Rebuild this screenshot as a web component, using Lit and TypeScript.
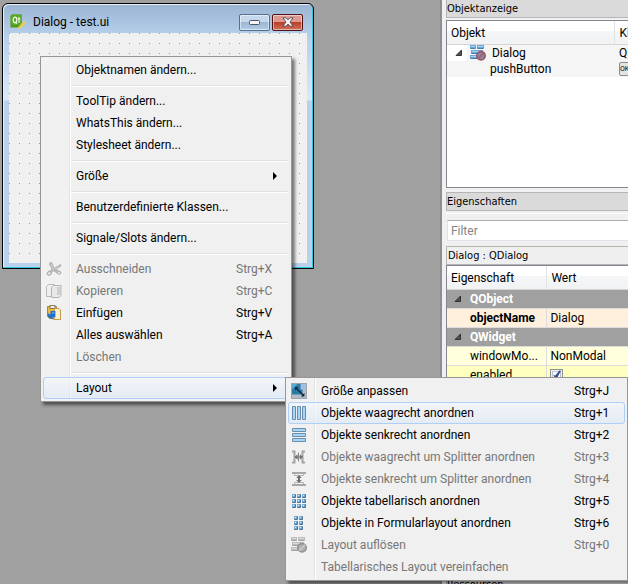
import { LitElement, html, css, svg, nothing, type TemplateResult } from "lit";
import { customElement, property } from "lit/decorators.js";
import { classMap } from "lit/directives/class-map.js";

interface MenuEntry {
  label?: string;
  keys?: string;
  icon?: string;
  disabled?: boolean;
  active?: boolean;
  submenu?: boolean;
  separator?: boolean;
}

const bar = (x: number, y: number, w: number, h: number, dim = false) => svg`
  <rect x=${x} y=${y} width=${w} height=${h} rx="1" fill=${dim ? "#9c9c9c" : "#6c8cab"}></rect>
  <rect x=${x + 1} y=${y + 1} width=${w - 2} height=${h - 2} fill=${dim ? "#d2d2d2" : "#a4d6f6"}></rect>`;

const cell = (x: number, y: number) => svg`
  <rect x=${x} y=${y} width="4" height="4" rx="1" fill="#4a7197"></rect>
  <rect x=${x} y=${y} width="3" height="3" rx="1" fill="#78b2dc"></rect>
  <rect x=${x + 1} y=${y + 1} width="1" height="1" fill="#d6efff"></rect>`;

const slab = (x: number, y: number, w: number, dim: boolean) => svg`
  <rect x=${x} y=${y} width=${w} height="4" rx="1" fill=${dim ? "#a4a4a4" : "#4c7faa"}></rect>
  <rect x=${x} y=${y} width=${w} height="3" rx="1" fill=${dim ? "#bcbcbc" : "#6aaadb"}></rect>
  <rect x=${x + 1} y=${y + 1} width=${w - 2} height="1" fill=${dim ? "#dadada" : "#a5d5f5"}></rect>`;

const breakLayout = (dim: boolean) => svg`
  ${slab(0, 0, 6, dim)}${slab(7, 0, 7, dim)}
  ${slab(1, 5, 12, dim)}${slab(0, 10, 8, dim)}
  <circle cx="11" cy="10.8" r="4.2" fill=${dim ? "#b0b0b0" : "#8a86a8"} stroke=${dim ? "#929292" : "#9a5568"} stroke-width="1.6"></circle>
  <path d="M8 13.8L14 7.9" stroke=${dim ? "#c8c8c8" : "#a85a6a"} stroke-width="1.6"></path>`;

const icons: Record<string, TemplateResult | TemplateResult[]> = {
  cut: svg`
    <path d="M4.2 1.6C5.6 1 6.3 2 6.7 3.6L8 7.2L14.6 3.4C15.4 4.6 14.6 5.6 13 6.4L9.6 8.2L14.4 10.6C15.8 11.6 15 13.6 13 13.4C11.6 13.2 10.8 12 9.4 11L7.4 9.8L5.6 11.8C5.4 13.6 4 14.8 2.2 14.4C0.6 13.8 0.6 11.6 2 10.6C3 9.8 4.4 9.8 5.4 9L6 8L3.4 3.4C3.2 2.6 3.6 2 4.2 1.6Z"
      fill="#b9b9b9" stroke="#a2a2a2" stroke-width="0.6"></path>
    <circle cx="3.2" cy="12.3" r="1.1" fill="#f0f0f0"></circle>
    <circle cx="12.9" cy="11.9" r="0.9" fill="#f0f0f0"></circle>
    <path d="M5 3L7.4 8.4M8.6 7.8L13.6 5" stroke="#d9d9d9" stroke-width="0.8"></path>`,
  copy: svg`
    <path d="M0.5 3.5L2.5 1.5H8.5V13.5H0.5Z" fill="#efefef" stroke="#bababa"></path>
    <path d="M5.5 4.5L7.5 2.5H15V12.5L13 14.5H5.5Z" fill="#e8e8e8" stroke="#b4b4b4"></path>
    <path d="M11 4H14.5V12H11Z" fill="#cecece"></path>`,
  paste: svg`
    <path d="M1.5 1.5H10.5V13.5H3.5L1.5 11.5Z" fill="#e8b93c" stroke="#b3872a"></path>
    <rect x="4" y="0.5" width="5" height="3" fill="#e9e9e2" stroke="#6f6c52" stroke-width="0.8"></rect>
    <path d="M8.5 3.5H13L14.5 5V14.5H7.5L8.5 13Z" fill="#fbf0c9" stroke="#c19b55"></path>
    <path d="M2 7C2 9 3 9.4 4.4 9.4L4.6 6H9.4V12.2H6.6V14.4L2.8 12.4C1.6 11 1.4 9 2 7Z" fill="#1f6fd0"></path>
    <path d="M6 7H8.4V9H6Z" fill="#4e9be8"></path>`,
  adjust: svg`
    <rect x="0.5" y="0.5" width="15" height="15" fill="#b3bcc6" stroke="#9aa5b0"></rect>
    <path d="M1 1H11.5V11.5H1Z" fill="#2a79a4"></path>
    <path d="M1 1H6.5L1 6.5Z" fill="#5da9cf"></path>
    <path d="M9.5 1H15V6.5H9.5Z" fill="#9fbfe0"></path>
    <path d="M5 5L12 12" stroke="#0d2238" stroke-width="1.2"></path>
    <path d="M4 4H7.4L4 7.4ZM13.4 13.4H10L13.4 10Z" fill="#0d2238"></path>`,
  horizontal: svg`${bar(1, 1, 4, 14)}${bar(6, 1, 4, 14)}${bar(11, 1, 4, 14)}`,
  vertical: svg`${bar(1, 1, 14, 4)}${bar(1, 6, 14, 4)}${bar(1, 11, 14, 4)}`,
  hsplit: svg`
    <path d="M1 2.5H3.5V13.5H1M14 2.5H11.5V13.5H14" fill="none" stroke="#a4a4a4" stroke-width="2"></path>
    <path d="M7.5 3.5V12.5" stroke="#8a8a8a"></path>
    <path d="M3.5 8L6.6 5.2V10.8ZM12 8L8.8 5.2V10.8Z" fill="#707070"></path>
    <path d="M4 8H11.5" stroke="#707070"></path>`,
  vsplit: svg`
    <path d="M1 2H15M1 14H15" stroke="#a8a8a8" stroke-width="2"></path>
    <path d="M3.5 3V4.5H12.5V3M3.5 13V11.5H12.5V13" fill="none" stroke="#b2b2b2"></path>
    <path d="M8 4L10.8 7H5.2ZM8 12L10.8 9H5.2Z" fill="#707070"></path>
    <path d="M8 5V11" stroke="#707070" stroke-width="2"></path>`,
  grid: svg`${[1, 6, 11].map((y) => [1, 6, 11].map((x) => cell(x, y)))}`,
  form: svg`${[1, 6, 11].map((y) => [3, 8].map((x) => cell(x, y)))}`,
  broken: svg`${breakLayout(false)}`,
  brokenDim: svg`${breakLayout(true)}`,
  qt: svg`
    <path d="M0.5 2L2 0.5H11.5V11L9.5 13.5H0.5Z" fill="#4f9b1b"></path>
    <path d="M0.5 2L2 0.5H11.5V11H2Z" fill="#5aa827"></path>
    <ellipse cx="5" cy="6" rx="1.8" ry="2.8" fill="none" stroke="#f4faee" stroke-width="1.2"></ellipse>
    <path d="M5.4 7.6L6.8 9.8M9 3V9M7.8 5H10.4" stroke="#f4faee" stroke-width="1.1"></path>
    <path d="M8.5 13L14 7.5L15.5 9L10 14.4L8 15Z" fill="#f4c628" stroke="#e6dca0" stroke-width="0.5"></path>`,
  arrow: svg`<path d="M6 4L10 8L6 12Z" fill="#000"></path>`,
  expander: svg`<path d="M10.5 5V10.5H5Z" fill="#505050" stroke="#202020" stroke-width="0.8"></path>`,
};

const icon = (name: string) =>
  html`<svg class="icon" viewBox="0 0 16 16" width="16" height="16" aria-hidden="true">${icons[name]}</svg>`;

@customElement("popup-menu")
export class PopupMenu extends LitElement {
  @property({ attribute: false }) entries: MenuEntry[] = [];

  static styles = css`
    :host {
      display: block;
      box-sizing: border-box;
      padding: 2px;
      border: 1px solid #979797;
      background: linear-gradient(to right, #f1f1f1 28px, #e2e3e3 28px, #e2e3e3 29px, #fff 29px, #fff 30px, #f0f0f0 30px);
      background-origin: padding-box;
      box-shadow: 3px 3px 3px rgba(0, 0, 0, 0.5);
      font: 12px/20px Roboto, "Open Sans", sans-serif;
      color: #000;
    }
    .item {
      display: flex;
      align-items: center;
      box-sizing: border-box;
      width: 100%;
      height: 22px;
      padding: 0 0 0 2px;
      border: 1px solid transparent;
      border-radius: 3px;
      background: none;
      font: inherit;
      color: inherit;
      text-align: left;
      white-space: nowrap;
    }
    .item:disabled { color: #777; }
    .item.active {
      border-color: #aecff7;
      background: linear-gradient(rgba(243, 247, 253, 0.7), rgba(221, 232, 247, 0.6));
    }
    .slot { flex: none; width: 16px; height: 16px; margin-right: 14px; }
    .icon { display: block; }
    .label { flex: 1; }
    .keys { flex: none; width: var(--keys-width, 52px); }
    .more { flex: none; width: 16px; margin-right: 5px; }
    hr {
      height: 1px;
      margin: 4px 1px 3px 28px;
      border: 0;
      border-top: 1px solid #e0e0e0;
      background: #fff;
    }
  `;

  render() {
    return html`<div role="menu">
      ${this.entries.map((e) =>
        e.separator
          ? html`<hr />`
          : html`<button role="menuitem" class=${classMap({ item: true, active: !!e.active })} ?disabled=${e.disabled}>
              <span class="slot">${e.icon ? icon(e.icon) : nothing}</span>
              <span class="label">${e.label}</span>
              ${e.keys ? html`<span class="keys">${e.keys}</span>` : nothing}
              ${e.submenu ? html`<span class="more">${icon("arrow")}</span>` : nothing}
            </button>`
      )}
    </div>`;
  }
}

@customElement("form-window")
export class FormWindow extends LitElement {
  static styles = css`
    :host {
      display: flex;
      flex-direction: column;
      box-sizing: border-box;
      padding: 0 5px 5px;
      border: 1px solid #000;
      border-radius: 6px 6px 0 0;
      background:
        linear-gradient(#9ab5d3, #b5cee9 30px, #dce9f7 96px, #b9d1ea 97px);
      box-shadow: inset -1px -1px #35c5dd, inset 1px 1px #e8f1fa;
      font: 12px/16px Roboto, "Open Sans", sans-serif;
      color: #000;
    }
    .bar { display: flex; align-items: center; height: 29px; padding: 7px 5px 0 2px; box-sizing: border-box; }
    .title { flex: 1; margin-left: 7px; }
    .icon { display: block; }
    .control {
      width: 31px;
      height: 17px;
      margin-left: 2px;
      padding: 0;
      display: grid;
      place-items: center;
      border: 1px solid #566f8e;
      border-radius: 2px;
      background: linear-gradient(#c6d8eb 50%, #9bb7d5 50%, #b4cde6);
      box-shadow: inset 0 0 0 1px rgba(255, 255, 255, 0.5);
    }
    .close {
      border-color: #4f1119;
      background: linear-gradient(#dd998d 50%, #b9412a 50%, #d0705a);
    }
    .canvas {
      flex: 1;
      margin: 0 1px;
      background: #f0f0f0 conic-gradient(from 270deg at 1px 1px, #999 90deg, transparent 0);
      background-size: 10px 10px;
    }
  `;

  render() {
    return html`
      <div class="bar">
        ${icon("qt")}
        <span class="title">Dialog - test.ui</span>
        <button class="control" aria-label="Minimieren">
          <svg width="11" height="5" viewBox="0 0 11 5"><rect x="0.5" y="0.5" width="10" height="4" rx="1" fill="#f6f6f6" stroke="#4a5566"></rect></svg>
        </button>
        <button class="control close" aria-label="Schließen">
          <svg width="12" height="10" viewBox="0 0 12 10">
            <path d="M1 0.8H4L6 2.9L8 0.8H11L8 5L11 9.2H8L6 7.1L4 9.2H1L4 5Z" fill="#f7f7f7" stroke="#4d4d5a" stroke-width="0.9"></path>
          </svg>
        </button>
      </div>
      <div class="canvas"></div>`;
  }
}

@customElement("app-root")
export class AppRoot extends LitElement {
  private contextMenu: MenuEntry[] = [
    { label: "Objektnamen ändern..." },
    { separator: true },
    { label: "ToolTip ändern..." },
    { label: "WhatsThis ändern..." },
    { label: "Stylesheet ändern..." },
    { separator: true },
    { label: "Größe", submenu: true },
    { separator: true },
    { label: "Benutzerdefinierte Klassen..." },
    { separator: true },
    { label: "Signale/Slots ändern..." },
    { separator: true },
    { label: "Ausschneiden", keys: "Strg+X", icon: "cut", disabled: true },
    { label: "Kopieren", keys: "Strg+C", icon: "copy", disabled: true },
    { label: "Einfügen", keys: "Strg+V", icon: "paste" },
    { label: "Alles auswählen", keys: "Strg+A" },
    { label: "Löschen", disabled: true },
    { separator: true },
    { label: "Layout", submenu: true, active: true },
  ];

  private layoutMenu: MenuEntry[] = [
    { label: "Größe anpassen", keys: "Strg+J", icon: "adjust" },
    { label: "Objekte waagrecht anordnen", keys: "Strg+1", icon: "horizontal", active: true },
    { label: "Objekte senkrecht anordnen", keys: "Strg+2", icon: "vertical" },
    { label: "Objekte waagrecht um Splitter anordnen", keys: "Strg+3", icon: "hsplit", disabled: true },
    { label: "Objekte senkrecht um Splitter anordnen", keys: "Strg+4", icon: "vsplit", disabled: true },
    { label: "Objekte tabellarisch anordnen", keys: "Strg+5", icon: "grid" },
    { label: "Objekte in Formularlayout anordnen", keys: "Strg+6", icon: "form" },
    { label: "Layout auflösen", keys: "Strg+0", icon: "brokenDim", disabled: true },
    { label: "Tabellarisches Layout vereinfachen", disabled: true },
  ];

  static styles = css`
    :host {
      display: flex;
      position: relative;
      height: 100vh;
      overflow: hidden;
      background: #f0f0f0;
      font: 12px/16px Roboto, "Open Sans", sans-serif;
      color: #000;
    }
    .workspace { flex: 1; position: relative; background: #a0a0a0; border-right: 2px solid #8e8e8e; }
    .form { position: absolute; left: 2px; top: 3px; width: 312px; height: 266px; }
    .context { position: absolute; left: 40px; top: 56px; width: 252px; }
    .layout { position: absolute; left: 285px; top: 377px; width: 343px; --keys-width: 50px; }
    .docks { flex: none; width: 29%; padding-left: 4px; display: flex; flex-direction: column; overflow: hidden; }
    .docks > * { flex: none; }
    .dock-title, .selection {
      box-sizing: border-box;
      height: 19px;
      margin: 0;
      padding: 0 1px 0 0;
      border: 1px solid #b5b5b5;
      border-right: 0;
      background: #dadada;
      font: 11px/18px "DejaVu Sans Condensed", "DejaVu Sans", sans-serif;
      white-space: nowrap;
    }
    .objects-title { border-top: 0; height: 18px; }
    .selection { background: #efefef; padding-left: 1px; }
    .view { box-sizing: border-box; border: 1px solid #828790; border-right: 0; background: #fff; overflow: hidden; white-space: nowrap; }
    .objects { margin: 2px 0 4px; height: 168px; }
    table { width: 100%; border-collapse: collapse; table-layout: fixed; }
    th, td { padding: 0; font-weight: 400; text-align: left; overflow: hidden; }
    th { height: 23px; padding-left: 4px; border-bottom: 1px solid #d5d5d5; background: linear-gradient(#fff 45%, #f5f6f7 45%, #f1f2f4); }
    th + th { border-left: 1px solid #e0e3e6; }
    .objects td { height: 16px; background: #f5f5f5; }
    .objects td:first-child { background: linear-gradient(to right, #fff 20px, #f5f5f5 20px); }
    .objects tr:last-child td { background: #f5f5f5; }
    .objects td + td { padding-left: 4px; }
    .main-col { width: 168px; }
    .tree { display: flex; align-items: center; }
    .tree .icon { flex: none; }
    .tree .icon:first-child { margin: 0 3px 0 4px; }
    .tree span { margin-left: 6px; }
    .child { padding-left: 43px; }
    .badge { display: block; box-sizing: border-box; width: 18px; height: 14px; border: 1px solid #8c8c8c; border-radius: 2px; background: #e4e4e4; font-size: 7px; line-height: 12px; }
    .filter { margin-top: 2px; padding: 6px 0 5px 1px; border-top: 1px solid #fff; }
    .filter input {
      display: block;
      box-sizing: border-box;
      width: 100%;
      height: 21px;
      padding: 0 3px;
      border: 1px solid #e2e3ea;
      border-top-color: #abadb3;
      border-right: 0;
      background: #fff;
      font: inherit;
    }
    .filter input::placeholder { color: #858585; opacity: 1; }
    .properties { height: 308px; margin-bottom: 2px; }
    .prop-col { width: 100px; }
    .properties td { box-sizing: border-box; height: 19px; padding-left: 3px; border-bottom: 1px solid #dcdcdc; }
    .properties td + td { border-left: 1px solid #dcdcdc; }
    .properties td.name { padding-left: 23px; }
    .properties .group td { padding: 0; background: #a0a0a0; color: #fff; font-weight: 700; }
    .group .tree .icon:first-child { margin: 0 0 0 3px; }
    .group .tree span { margin-left: 4px; }
    .changed td { background: #fff0de; }
    .changed .name { font-weight: 700; }
    .pale td { background: #ffffdc; }
    .strong td { background: #ffffbf; }
    .check {
      display: block;
      appearance: none;
      box-sizing: border-box;
      width: 13px;
      height: 13px;
      margin: 0;
      border: 1px solid #8e8f8f;
      background: #fff;
      box-shadow: inset 0 0 0 1px #f4f4f4, inset 0 0 0 2px #b9c3cf;
    }
    .check::before {
      content: "";
      display: block;
      width: 11px;
      height: 11px;
      background: #3a4f92;
      clip-path: polygon(18% 45%, 36% 55%, 72% 8%, 88% 12%, 44% 92%, 34% 92%);
    }
  `;

  render() {
    return html`
      <main class="workspace"><form-window class="form"></form-window></main>
      <aside class="docks">
        <h2 class="dock-title objects-title">Objektanzeige</h2>
        <div class="view objects">
          <table>
            <colgroup><col class="main-col" /><col /></colgroup>
            <thead><tr><th>Objekt</th><th>Klasse</th></tr></thead>
            <tbody>
              <tr><td><div class="tree">${icon("expander")}${icon("broken")}<span>Dialog</span></div></td><td>QDialog</td></tr>
              <tr><td class="child">pushButton</td><td><span class="badge">OK</span></td></tr>
            </tbody>
          </table>
        </div>
        <h2 class="dock-title">Eigenschaften</h2>
        <div class="filter"><input type="text" placeholder="Filter" aria-label="Filter" /></div>
        <p class="selection">Dialog : QDialog</p>
        <div class="view properties">
          <table>
            <colgroup><col class="prop-col" /><col /></colgroup>
            <thead><tr><th>Eigenschaft</th><th>Wert</th></tr></thead>
            <tbody>
              <tr class="group"><td colspan="2"><div class="tree">${icon("expander")}<span>QObject</span></div></td></tr>
              <tr class="changed"><td class="name">objectName</td><td>Dialog</td></tr>
              <tr class="group"><td colspan="2"><div class="tree">${icon("expander")}<span>QWidget</span></div></td></tr>
              <tr class="pale"><td class="name">windowMo...</td><td>NonModal</td></tr>
              <tr class="strong"><td class="name"><label for="enabled">enabled</label></td><td><input id="enabled" class="check" type="checkbox" checked /></td></tr>
            </tbody>
          </table>
        </div>
        <h2 class="dock-title">Ressourcen</h2>
      </aside>
      <popup-menu class="context" .entries=${this.contextMenu}></popup-menu>
      <popup-menu class="layout" .entries=${this.layoutMenu}></popup-menu>
    `;
  }
}
